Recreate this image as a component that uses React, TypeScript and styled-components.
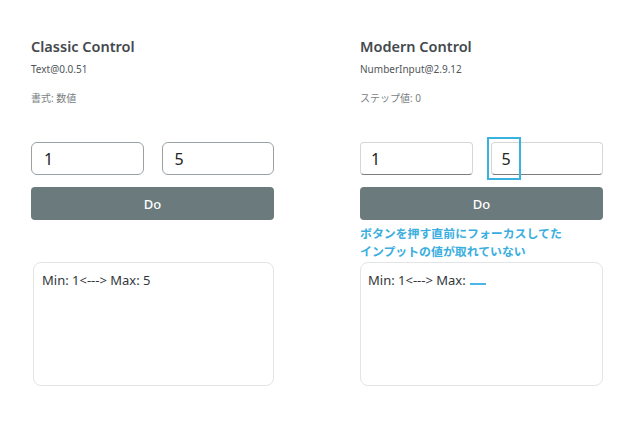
import React from "react";
import styled, { createGlobalStyle } from "styled-components";

const Global = createGlobalStyle`
  html, body { margin: 0; padding: 0; background: #ffffff; }
  body { font-family: "Noto Sans", "Noto Sans CJK JP", sans-serif; }
  * { box-sizing: border-box; }
`;

const Page = styled.div`
  display: flex;
  width: 630px;
  height: 440px;
  padding: 36px 0 0 31px;
  gap: 86px;
`;

const Column = styled.div`
  display: flex;
  flex-direction: column;
  width: 243px;
`;

const Title = styled.div`
  font-size: 14.5px;
  font-weight: 600;
  line-height: 20px;
  color: #44494e;
  height: 20px;
`;

const Version = styled.div`
  margin-top: 6px;
  font-size: 10px;
  line-height: 14px;
  color: #50565a;
`;

const Format = styled.div`
  margin-top: 15px;
  font-size: 10px;
  line-height: 14px;
  color: #7a7f83;
`;

const InputRow = styled.div`
  margin-top: 37px;
  display: flex;
  gap: 18px;
  height: 33px;
`;

const InputWrap = styled.div`
  position: relative;
  flex: 1;
  display: flex;
`;

const Field = styled.div<{ $modern?: boolean }>`
  flex: 1;
  display: flex;
  align-items: center;
  padding-left: ${(p) => (p.$modern ? "10px" : "12px")};
  font-size: 16px;
  color: #242424;
  background: #fff;
  border: 1px solid ${(p) => (p.$modern ? "#d6d6d6" : "#9aa1a4")};
  border-bottom-color: ${(p) => (p.$modern ? "#7d7d7d" : "#9aa1a4")};
  border-radius: ${(p) => (p.$modern ? "4px" : "6px")};
`;

const FocusBox = styled.div`
  position: absolute;
  left: -4px;
  top: -5px;
  width: 34px;
  height: 43px;
  border: 2px solid #3ab2e0;
`;

const Button = styled.div`
  margin-top: 12px;
  height: 33px;
  border-radius: 4px;
  background: #6b7a7c;
  color: #ffffff;
  font-size: 13px;
  font-weight: 500;
  display: flex;
  align-items: center;
  justify-content: center;
`;

const Note = styled.div`
  height: 42px;
  padding-top: 4px;
  font-size: 11.9px;
  font-weight: 700;
  line-height: 18px;
  color: #3aaee0;
`;

const Output = styled.div<{ $inset?: boolean }>`
  height: 124px;
  margin-left: ${(p) => (p.$inset ? "2px" : "0")};
  border: 1px solid #e2e4e5;
  border-radius: 8px;
  padding: 7px 9px 9px ${(p) => (p.$inset ? "8px" : "7px")};
  font-size: 13px;
  line-height: 20px;
  color: #33373a;
`;

const Blank = styled.span`
  display: inline-block;
  width: 16px;
  height: 10px;
  margin-left: 4px;
  border-bottom: 2px solid #4ab8e6;
`;

export default function App() {
  return (
    <>
      <Global />
      <Page>
        <Column>
          <Title>Classic Control</Title>
          <Version>Text@0.0.51</Version>
          <Format>書式: 数値</Format>
          <InputRow>
            <InputWrap>
              <Field>1</Field>
            </InputWrap>
            <InputWrap>
              <Field>5</Field>
            </InputWrap>
          </InputRow>
          <Button>Do</Button>
          <Note />
          <Output $inset>Min: 1&lt;---&gt; Max: 5</Output>
        </Column>
        <Column>
          <Title>Modern Control</Title>
          <Version>NumberInput@2.9.12</Version>
          <Format>ステップ値: 0</Format>
          <InputRow>
            <InputWrap>
              <Field $modern>1</Field>
            </InputWrap>
            <InputWrap>
              <Field $modern>5</Field>
              <FocusBox />
            </InputWrap>
          </InputRow>
          <Button>Do</Button>
          <Note>
            ボタンを押す直前にフォーカスしてた
            <br />
            インプットの値が取れていない
          </Note>
          <Output>
            Min: 1&lt;---&gt; Max:
            <Blank />
          </Output>
        </Column>
      </Page>
    </>
  );
}
